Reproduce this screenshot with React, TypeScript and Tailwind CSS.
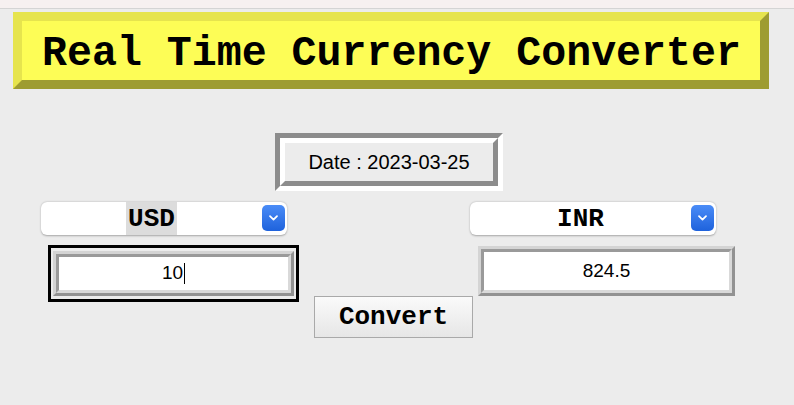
import React from "react";

function Chevron() {
  return (
    <div className="flex h-[26px] w-[23px] items-center justify-center rounded-[5px] bg-gradient-to-b from-[#4a8cf7] to-[#1e62dc]">
      <svg width="11" height="8" viewBox="0 0 11 8" fill="none">
        <path d="M2 2.2 L5.5 5.6 L9 2.2" stroke="white" strokeWidth="1.8" strokeLinecap="round" strokeLinejoin="round" />
      </svg>
    </div>
  );
}

function Select({ label, highlight }: { label: string; highlight?: boolean }) {
  return (
    <div className="relative flex h-[33px] w-[246px] items-center justify-center rounded-[6px] bg-white pr-[25px] shadow-[0_0.5px_2px_rgba(0,0,0,0.3)]">
      <span
        className={
          "flex h-full items-center px-[2px] text-[26px] font-bold text-black leading-none " +
          (highlight ? "bg-[#dcdcdc]" : "")
        }
        style={{ fontFamily: '"Liberation Mono", "Courier New", monospace' }}
      >
        {label}
      </span>
      <div className="absolute right-[2px] top-[3px]">
        <Chevron />
      </div>
    </div>
  );
}

function Entry({ value, cursor, w, h }: { value: string; cursor?: boolean; w: string; h: string }) {
  return (
    <div className={"border-[3px] border-t-[#d4d4d4] border-l-[#d4d4d4] border-r-[#929292] border-b-[#929292] " + w + " " + h}>
      <div className="flex h-full w-full items-center justify-center border-[3px] border-t-[#9a9a9a] border-l-[#9a9a9a] border-r-[#d9d9d9] border-b-[#d9d9d9] bg-white">
        <span className="text-[19px] text-black" style={{ fontFamily: '"Liberation Sans", Arial, sans-serif' }}>
          {value}
        </span>
        {cursor && <span className="ml-[1px] h-[21px] w-[1px] bg-black" />}
      </div>
    </div>
  );
}

export default function App() {
  return (
    <div className="h-[405px] w-[794px] overflow-hidden bg-[#ececec]">
      <div className="h-[9px] border-b border-[#d4d4d4] bg-[#f6f0f0]" />
      <div className="px-[13px] pt-[3px]">
        <div className="h-[77px] w-[756px] border-[9px] border-t-[#e6e44e] border-l-[#e6e44e] border-r-[#9e9c31] border-b-[#9e9c31] bg-[#fdfd56]">
          <div className="flex h-full items-center pl-[20px] pt-[7px]">
            <span
              className="text-[41.6px] font-bold leading-none text-black"
              style={{ fontFamily: '"Liberation Mono", "Courier New", monospace' }}
            >
              Real Time Currency Converter
            </span>
          </div>
        </div>
      </div>
      <div className="mt-[44px] flex">
        <div className="ml-[275px] h-[58px] w-[228px] border-[5px] border-t-[#8c8c8c] border-l-[#8c8c8c] border-r-white border-b-white">
          <div className="flex h-full w-full items-center justify-center border-[5px] border-t-white border-l-white border-r-[#8c8c8c] border-b-[#8c8c8c]">
            <span className="text-[20px] text-black" style={{ fontFamily: '"Liberation Sans", Arial, sans-serif' }}>
              Date : 2023-03-25
            </span>
          </div>
        </div>
      </div>
      <div className="mt-[11px] flex">
        <div className="ml-[41px]">
          <Select label="USD" highlight />
        </div>
        <div className="ml-[183px]">
          <Select label="INR" />
        </div>
      </div>
      <div className="mt-[10px] flex items-start">
        <div className="ml-[48px] h-[57px] w-[251px] border-[3px] border-black px-[2px] py-[3px]">
          <Entry value="10" cursor w="w-full" h="h-full" />
        </div>
        <div className="ml-[179px] mt-[1px]">
          <Entry value="824.5" w="w-[257px]" h="h-[50px]" />
        </div>
      </div>
      <div className="-mt-[6px] flex">
        <button
          className="ml-[314px] flex h-[42px] w-[159px] items-center justify-center border border-[#a9a9a9] bg-gradient-to-b from-[#fafafa] to-[#e6e6e6]"
        >
          <span
            className="text-[26px] font-bold leading-none text-black"
            style={{ fontFamily: '"Liberation Mono", "Courier New", monospace' }}
          >
            Convert
          </span>
        </button>
      </div>
    </div>
  );
}
